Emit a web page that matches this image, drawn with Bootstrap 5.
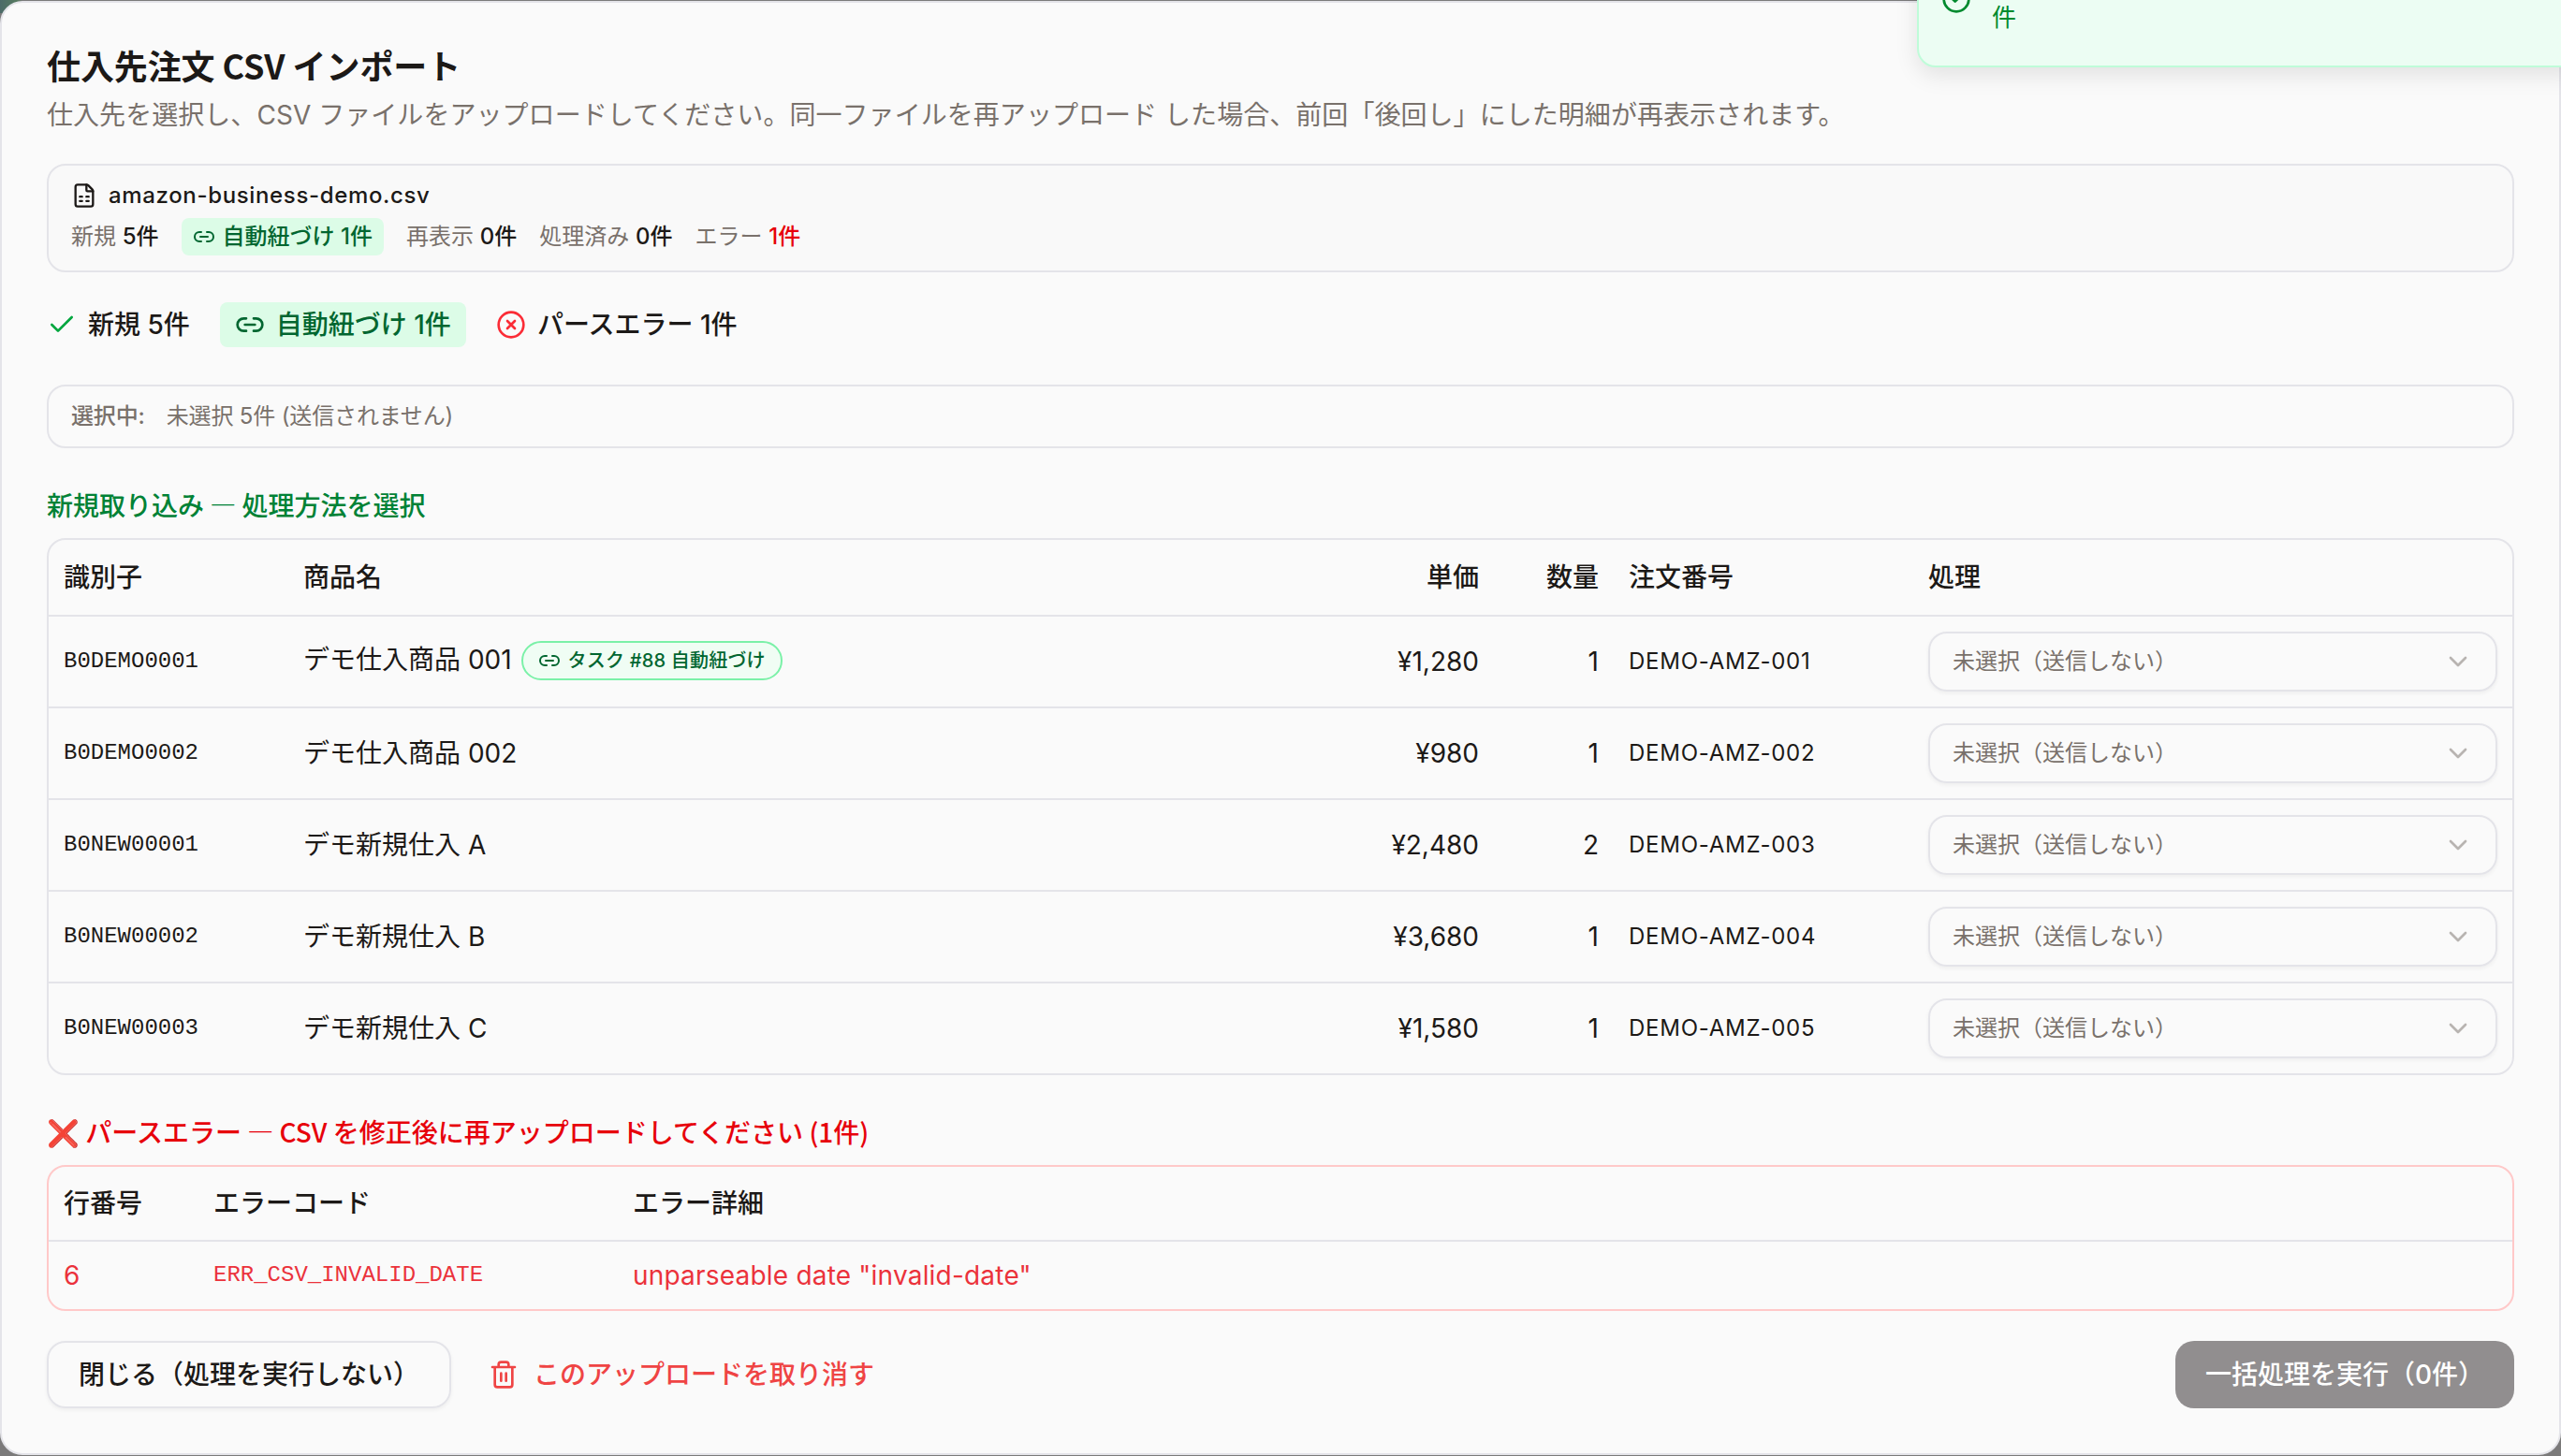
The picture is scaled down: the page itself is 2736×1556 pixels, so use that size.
<!DOCTYPE html>
<html lang="ja">
<head>
    <meta charset="UTF-8">
    <meta content="width=device-width, initial-scale=1.0" name="viewport">
    <title>仕入先注文 CSV インポート</title>
    <link href="https://cdn.jsdelivr.net/npm/bootstrap@5.3.2/dist/css/bootstrap.min.css" rel="stylesheet">
    <style>
        body {
            background: #7b7a7a linear-gradient(90deg, #4c6a68 0, #567a60 18px, #7b7a7a 24px) no-repeat 0 0 / 100% 14px;
            color: #1c1917;
            font-family: Inter, "Noto Sans CJK JP", sans-serif;
            font-optical-sizing: none;
            font-size: 28px;
            line-height: 40px;
            overflow: hidden;
        }

        svg {
            fill: none;
            stroke: currentColor;
            stroke-width: 2;
            stroke-linecap: round;
            stroke-linejoin: round;
            flex-shrink: 0;
        }

        .icon-xs { width: 24px; height: 24px; }
        .icon-sm { width: 28px; height: 28px; }
        .icon-md { width: 32px; height: 32px; }

        .gap-12 { gap: 12px; }

        .import-dialog {
            margin-top: 1px;
            height: 1554px;
            padding: 48px;
            border: 2px solid #e4e4e9;
            border-radius: 24px;
            background-color: #fafafa;
        }

        .dialog-title {
            font-family: "Noto Sans CJK JP", sans-serif;
            font-size: 36px;
            line-height: 36px;
            font-weight: 600;
            letter-spacing: -0.1px;
            margin-bottom: 16px;
        }

        .dialog-text { letter-spacing: 0.05px; margin-bottom: 32px; }
        .text-soft { color: #79716b; }
        .text-ok { color: #008236; }
        .text-err { color: #e7000b; }
        .stroke-ok { stroke: #00a63e; }
        .stroke-err { stroke: #fb2c36; }

        .panel {
            border: 2px solid #e4e4e9;
            border-radius: 20px;
            padding: 16px 24px;
            font-size: 24px;
            line-height: 32px;
        }

        .panel-file { background-color: #f9f9f9; margin-bottom: 32px; }
        .panel-stats { gap: 24px; }
        .panel-picked { gap: 23px; letter-spacing: -0.15px; }
        .file-name { letter-spacing: 0.65px; }

        .tag-linked {
            background-color: #dcfce7;
            color: #016630;
            border-radius: 8px;
            padding: 4px 12px;
            gap: 8px;
        }

        .summary { gap: 32px; height: 48px; margin-bottom: 40px; }
        .summary .tag-linked { padding: 4px 16px; gap: 12px; }

        .section-title {
            font-family: "Noto Sans CJK JP", sans-serif;
            font-size: 28px;
            line-height: 40px;
            font-weight: 500;
            margin: 40px 0 16px;
        }

        .table-box {
            border: 2px solid #e4e4e9;
            border-radius: 20px;
            overflow: hidden;
        }

        .table-box.box-err { border-color: #ffc9c9; margin-bottom: 32px; }

        .grid-table {
            --bs-table-bg: transparent;
            --bs-table-color: inherit;
            table-layout: fixed;
            border-collapse: separate;
            border-spacing: 0;
            margin: 0;
            color: inherit;
        }

        .grid-table th, .grid-table td {
            padding: 0 16px;
            height: 98px;
            border-bottom: 2px solid #e4e4e9;
            vertical-align: middle;
        }

        .grid-table th { height: 82px; font-weight: 500; }
        .grid-table tbody tr:last-child td { height: 96px; border-bottom: 0; }
        .box-err .grid-table th { height: 80px; }
        .box-err .grid-table tbody tr:last-child td { height: 72px; color: #eb323b; }

        .grid-table .code { font-family: "Liberation Mono", monospace; font-size: 24px; }
        .order-no { font-size: 24px; letter-spacing: 0.75px; }
        .err-detail { letter-spacing: 0.2px; }
        .name-linked { padding-bottom: 4px; }

        .task-badge {
            height: 42px;
            padding: 0 16px;
            margin: 0 0 2px 10px;
            gap: 8px;
            border: 2px solid #7bf1a8;
            background-color: #f0fdf4;
            color: #016630;
            font-size: 20px;
            font-weight: 500;
            letter-spacing: 0.2px;
            border-radius: 21px;
        }

        .picker {
            height: 64px;
            padding: 0 24px;
            border: 2px solid #e4e4e9;
            border-radius: 20px;
            box-shadow: 0 2px 4px rgba(0, 0, 0, 0.05);
            color: #79716b;
            font-size: 24px;
        }

        .picker svg { opacity: 0.5; }

        .footer-btn {
            height: 72px;
            padding: 0 32px;
            border: 0;
            border-radius: 20px;
            font-size: 28px;
            font-weight: 500;
            line-height: 40px;
        }

        .btn-close-dialog {
            border: 2px solid #e4e4e9;
            box-shadow: 0 2px 4px rgba(0, 0, 0, 0.05);
            color: #1c1917;
        }

        .btn-revert { color: #ef4444; padding: 0 24px; }
        .btn-run, .btn-run:disabled { background-color: #918e8f; color: #fff; opacity: 1; }

        .toast-note {
            top: -74px;
            left: 2048px;
            width: 712px;
            height: 146px;
            padding: 32px 24px;
            gap: 22px;
            border: 2px solid #bffcd9;
            border-radius: 20px;
            background-color: #ecfdf3;
            color: #008a2e;
            box-shadow: 0 8px 24px rgba(0, 0, 0, 0.1);
            font-size: 26px;
            line-height: 39px;
        }
    </style>
</head>
<body>
<main class="import-dialog">
    <h1 class="dialog-title">仕入先注文 CSV インポート</h1>
    <p class="dialog-text text-soft">仕入先を選択し、CSV ファイルをアップロードしてください。同一ファイルを再アップロード した場合、前回「後回し」にした明細が再表示されます。</p>

    <div class="panel panel-file">
        <div class="d-flex align-items-center gap-12 fw-medium mb-2">
            <svg class="icon-sm" viewBox="0 0 24 24"><path d="M6 22a2 2 0 0 1-2-2V4a2 2 0 0 1 2-2h8a2.4 2.4 0 0 1 1.7.7l3.6 3.6A2.4 2.4 0 0 1 20 8v12a2 2 0 0 1-2 2z"/><path d="M14 2v5a1 1 0 0 0 1 1h5M8 13h2M14 13h2M8 17h2M14 17h2"/></svg>
            <span class="file-name">amazon-business-demo.csv</span>
        </div>
        <div class="d-flex align-items-center panel-stats">
            <span><span class="text-soft">新規</span> <span class="fw-medium">5件</span></span>
            <span class="tag-linked d-flex align-items-center fw-medium">
                <svg class="icon-xs" viewBox="0 0 24 24"><path d="M9 17H7A5 5 0 0 1 7 7h2M15 7h2a5 5 0 1 1 0 10h-2M8 12h8"/></svg>
                <span>自動紐づけ 1件</span>
            </span>
            <span><span class="text-soft">再表示</span> <span class="fw-medium">0件</span></span>
            <span><span class="text-soft">処理済み</span> <span class="fw-medium">0件</span></span>
            <span><span class="text-soft">エラー</span> <span class="fw-medium text-err">1件</span></span>
        </div>
    </div>

    <div class="d-flex align-items-center fw-medium summary">
        <span class="d-flex align-items-center gap-12">
            <svg class="icon-md stroke-ok" viewBox="0 0 24 24"><path d="M20 6 9 17l-5-5"/></svg>
            <span>新規 5件</span>
        </span>
        <span class="tag-linked d-flex align-items-center">
            <svg class="icon-md" viewBox="0 0 24 24"><path d="M9 17H7A5 5 0 0 1 7 7h2M15 7h2a5 5 0 1 1 0 10h-2M8 12h8"/></svg>
            <span>自動紐づけ 1件</span>
        </span>
        <span class="d-flex align-items-center gap-12">
            <svg class="icon-md stroke-err" viewBox="0 0 24 24"><circle cx="12" cy="12" r="10"/><path d="m15 9-6 6M9 9l6 6"/></svg>
            <span>パースエラー 1件</span>
        </span>
    </div>

    <div class="panel panel-picked text-soft d-flex">
        <span class="fw-medium">選択中:</span>
        <span>未選択 5件 (送信されません)</span>
    </div>

    <h2 class="section-title text-ok">新規取り込み — 処理方法を選択</h2>
    <div class="table-box">
        <table class="table grid-table">
            <colgroup>
                <col style="width: 256px"><col><col style="width: 192px"><col style="width: 128px"><col style="width: 320px"><col style="width: 640px">
            </colgroup>
            <thead>
            <tr><th>識別子</th><th>商品名</th><th class="text-end">単価</th><th class="text-end">数量</th><th>注文番号</th><th>処理</th></tr>
            </thead>
            <tbody id="itemRows"></tbody>
        </table>
    </div>

    <h2 class="section-title text-err">❌ パースエラー — CSV を修正後に再アップロードしてください (1件)</h2>
    <div class="table-box box-err">
        <table class="table grid-table">
            <colgroup><col style="width: 160px"><col style="width: 448px"><col></colgroup>
            <thead>
            <tr><th>行番号</th><th>エラーコード</th><th>エラー詳細</th></tr>
            </thead>
            <tbody>
            <tr><td>6</td><td class="code">ERR_CSV_INVALID_DATE</td><td class="err-detail">unparseable date "invalid-date"</td></tr>
            </tbody>
        </table>
    </div>

    <div class="d-flex align-items-center gap-3">
        <button class="btn footer-btn btn-close-dialog" type="button">閉じる（処理を実行しない）</button>
        <button class="btn footer-btn btn-revert d-flex align-items-center gap-3" type="button">
            <svg class="icon-md" viewBox="0 0 24 24"><path d="M3 6h18M19 6v14a2 2 0 0 1-2 2H7a2 2 0 0 1-2-2V6M8 6V4a2 2 0 0 1 2-2h4a2 2 0 0 1 2 2v2M10 11v6M14 11v6"/></svg>
            <span>このアップロードを取り消す</span>
        </button>
        <button class="btn footer-btn btn-run ms-auto" disabled type="button">一括処理を実行（0件）</button>
    </div>
</main>

<div class="toast-note position-absolute d-flex">
    <svg class="icon-md align-self-center" viewBox="0 0 24 24"><circle cx="12" cy="12" r="10"/><path d="m9 12 2 2 4-4"/></svg>
    <span class="align-self-end">件</span>
</div>

<script src="https://cdn.jsdelivr.net/npm/bootstrap@5.3.2/dist/js/bootstrap.bundle.min.js"></script>
<script>
    const items = [
        {code: 'B0DEMO0001', name: 'デモ仕入商品 001', price: 1280, qty: 1, order: 'DEMO-AMZ-001', task: 88},
        {code: 'B0DEMO0002', name: 'デモ仕入商品 002', price: 980, qty: 1, order: 'DEMO-AMZ-002'},
        {code: 'B0NEW00001', name: 'デモ新規仕入 A', price: 2480, qty: 2, order: 'DEMO-AMZ-003'},
        {code: 'B0NEW00002', name: 'デモ新規仕入 B', price: 3680, qty: 1, order: 'DEMO-AMZ-004'},
        {code: 'B0NEW00003', name: 'デモ新規仕入 C', price: 1580, qty: 1, order: 'DEMO-AMZ-005'}
    ];

    const nameCell = (item) => {
        if (!item.task) {
            return item.name;
        }
        return `<div class="d-flex align-items-center">
            <span class="name-linked">${item.name}</span>
            <span class="task-badge d-flex align-items-center">
                <svg class="icon-xs" viewBox="0 0 24 24"><path d="M9 17H7A5 5 0 0 1 7 7h2M15 7h2a5 5 0 1 1 0 10h-2M8 12h8"/></svg>
                <span>タスク #${item.task} 自動紐づけ</span>
            </span>
        </div>`;
    };

    document.getElementById('itemRows').innerHTML = items.map(item => `
        <tr>
            <td class="code">${item.code}</td>
            <td>${nameCell(item)}</td>
            <td class="text-end">¥${item.price.toLocaleString('en-US')}</td>
            <td class="text-end">${item.qty}</td>
            <td class="order-no">${item.order}</td>
            <td>
                <div class="picker d-flex align-items-center justify-content-between">
                    <span>未選択（送信しない）</span>
                    <svg class="icon-md" viewBox="0 0 24 24"><path d="m6 9 6 6 6-6"/></svg>
                </div>
            </td>
        </tr>`).join('');
</script>
</body>
</html>
